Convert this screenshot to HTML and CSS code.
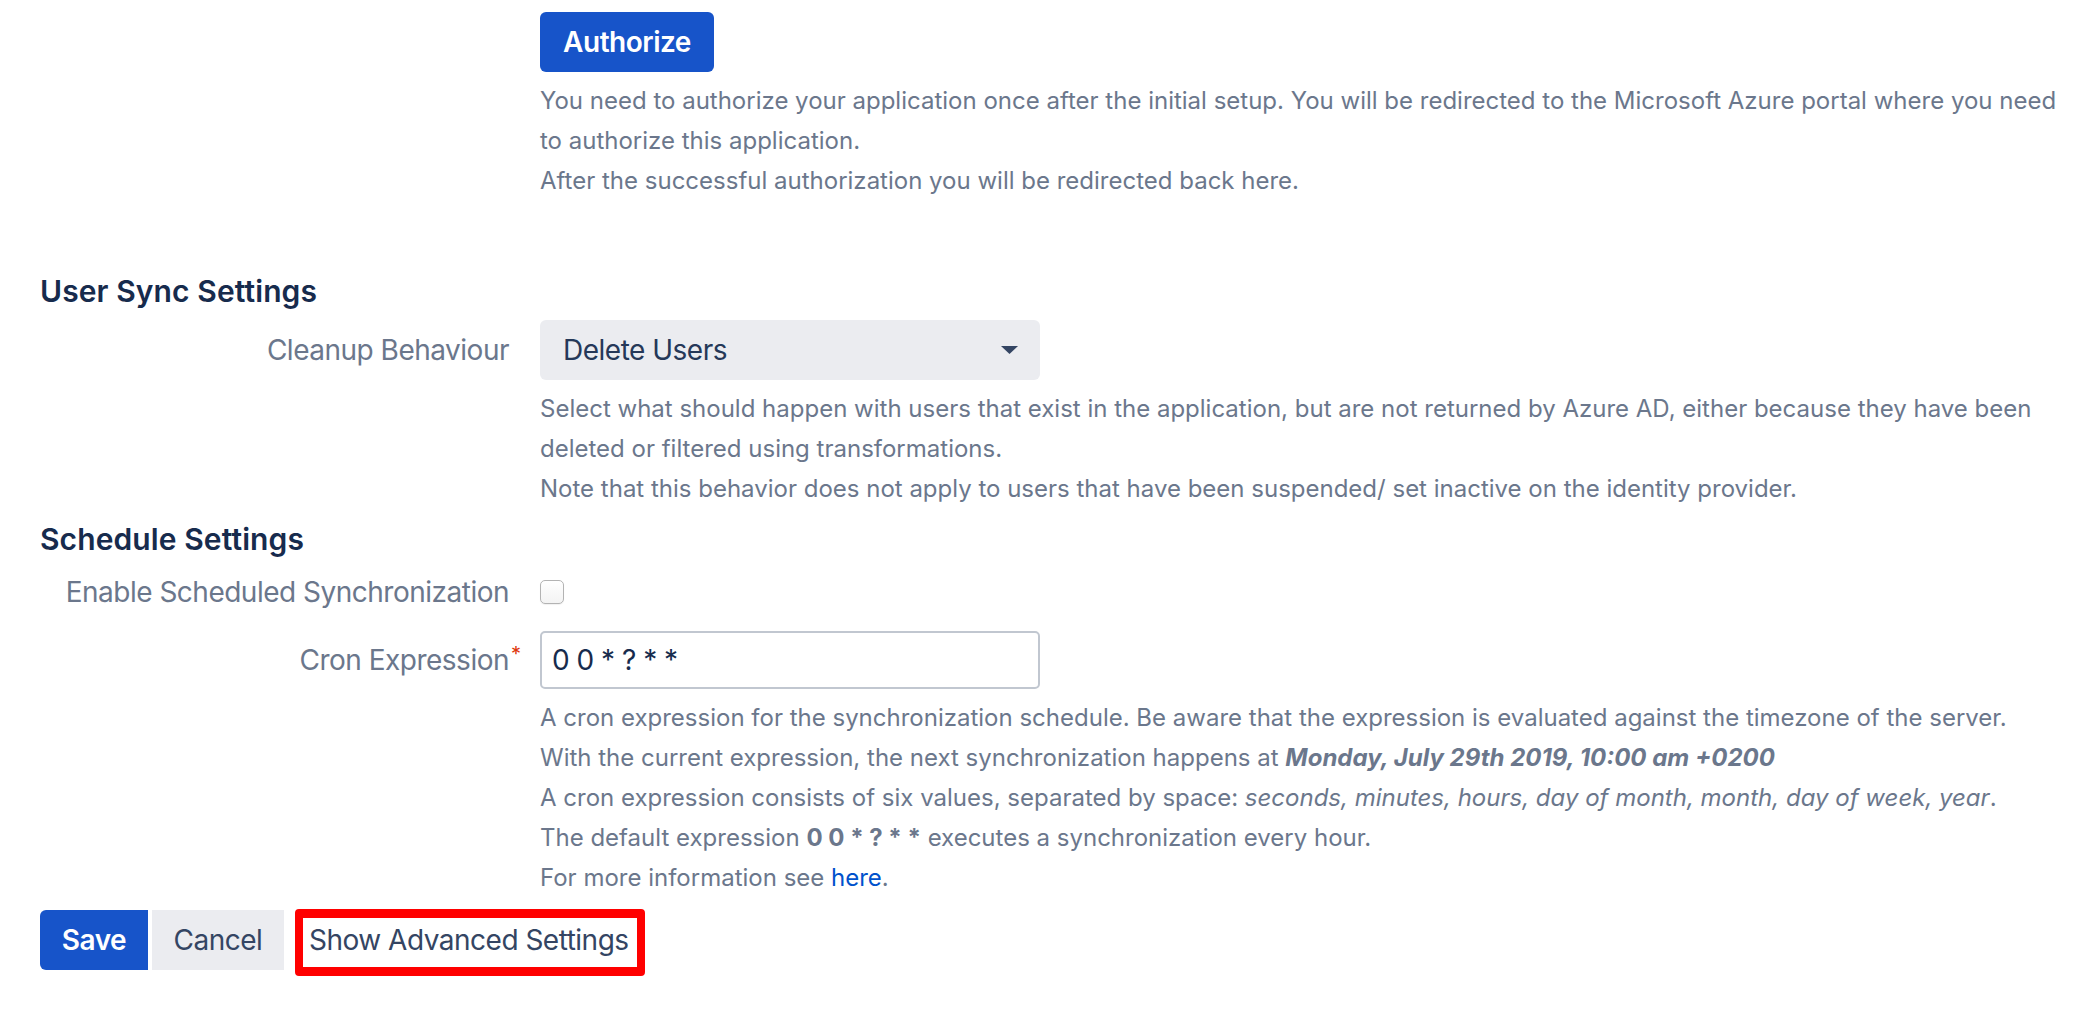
FILE: index.html
```html
<!DOCTYPE html>
<html lang="en">
<head>
<meta charset="utf-8">
<title>Azure AD User Sync</title>
<link rel="stylesheet" href="styles.css">
</head>
<body>
<form class="form">
  <div class="field-group auth-group">
    <div class="label"></div>
    <div class="field">
      <button type="button" class="btn btn-primary btn-authorize">Authorize</button>
      <div class="description">You need to authorize your application once after the initial setup. You will be redirected to the Microsoft Azure portal where you need<br>to authorize this application.<br>After the successful authorization you will be redirected back here.</div>
    </div>
  </div>

  <h3 class="section-title first">User Sync Settings</h3>
  <div class="field-group cleanup-group">
    <label class="label label-select">Cleanup Behaviour</label>
    <div class="field">
      <div class="select">
        <span>Delete Users</span>
        <svg class="select-arrow" width="17" height="8" viewBox="0 0 17 8"><path d="M0 0 H17 L8.5 8 Z" fill="#344563"/></svg>
      </div>
      <div class="description">Select what should happen with users that exist in the application, but are not returned by Azure AD, either because they have been<br>deleted or filtered using transformations.<br>Note that this behavior does not apply to users that have been suspended/ set inactive on the identity provider.</div>
    </div>
  </div>

  <h3 class="section-title">Schedule Settings</h3>
  <div class="field-group checkbox-group">
    <label class="label">Enable Scheduled Synchronization</label>
    <div class="field field-check">
      <input type="checkbox" class="checkbox">
    </div>
  </div>
  <div class="field-group cron-group">
    <label class="label label-input"><span class="req-wrap">Cron Expression<span class="required">*</span></span></label>
    <div class="field">
      <input type="text" class="text-input" value="0 0 * ? * *">
      <div class="description">A cron expression for the synchronization schedule. Be aware that the expression is evaluated against the timezone of the server.<br>With the current expression, the next synchronization happens at <strong><em>Monday, July 29th 2019, 10:00 am +0200</em></strong><br>A cron expression consists of six values, separated by space: <em>seconds, minutes, hours, day of month, month, day of week, year</em>.<br>The default expression <strong>0 0 * ? * *</strong> executes a synchronization every hour.<br>For more information see <a href="#" class="link">here</a>.</div>
    </div>
  </div>

  <div class="buttons">
    <button type="button" class="btn btn-primary btn-save">Save</button>
    <button type="button" class="btn btn-default btn-cancel">Cancel</button>
    <div class="highlight">
      <button type="button" class="btn btn-link">Show Advanced Settings</button>
    </div>
  </div>
</form>
</body>
</html>
```
FILE: styles.css
```css
html, body {
  margin: 0;
  padding: 0;
  background: #ffffff;
}

body {
  font-family: Inter, Roboto, "Noto Sans", "Liberation Sans", sans-serif;
  font-size: 28px;
  line-height: 40px;
  letter-spacing: -0.5px;
  color: #172b4d;
}

.form {
  display: flex;
  flex-direction: column;
  padding: 12px 20px 0 40px;
}

.field-group {
  display: grid;
  grid-template-columns: 469px 1fr;
  column-gap: 31px;
}

.label {
  color: #6b778c;
  text-align: right;
  white-space: nowrap;
}

.label-select {
  padding-top: 10px;
}

.label-input {
  padding-top: 9px;
}

.req-wrap {
  position: relative;
}

.required {
  position: absolute;
  left: 100%;
  top: -9px;
  margin-left: 2px;
  color: #de350b;
  font-size: 20px;
}

.field {
  min-width: 0;
}

.description {
  margin-top: 9px;
  font-size: 24px;
  letter-spacing: 0;
  color: #6b778c;
  white-space: nowrap;
}

.description strong {
  font-weight: 700;
}

.link {
  color: #0052cc;
  text-decoration: none;
}

.section-title {
  margin: 0;
  font-size: 30px;
  line-height: 40px;
  font-weight: 600;
  letter-spacing: 0.1px;
  color: #172b4d;
}

.section-title.first {
  margin-top: 70px;
}

.section-title:not(.first) {
  margin-top: 10px;
}

.cleanup-group {
  margin-top: 9px;
}

.checkbox-group {
  margin-top: 13px;
}

.cron-group {
  margin-top: 19px;
}

.field-check {
  display: flex;
  align-items: center;
  height: 40px;
}

.btn {
  font-family: inherit;
  font-size: 28px;
  line-height: 40px;
  letter-spacing: -0.5px;
  height: 60px;
  padding: 0 20px;
  border: 0;
  margin: 0;
  cursor: pointer;
}

.btn-primary {
  background: #1754c9;
  color: #ffffff;
  font-weight: 600;
}

.btn-authorize {
  display: block;
  width: 174px;
  border-radius: 6px;
}

.btn-default {
  background: #ebecf0;
  color: #344563;
}

.select {
  width: 500px;
  height: 60px;
  box-sizing: border-box;
  display: flex;
  align-items: center;
  justify-content: space-between;
  padding: 0 22px 0 23px;
  background: #ebecf0;
  border-radius: 6px;
  color: #253858;
}

.select-arrow {
  display: block;
}

.checkbox {
  -webkit-appearance: none;
  appearance: none;
  width: 24px;
  height: 24px;
  margin: 0;
  box-sizing: border-box;
  border: 1px solid #b3b3b3;
  border-radius: 5px;
  background: linear-gradient(#ffffff, #f3f3f3);
  box-shadow: 0 1px 1px rgba(0, 0, 0, 0.06);
}

.text-input {
  display: block;
  width: 500px;
  height: 58px;
  box-sizing: border-box;
  margin: 0;
  padding: 0 10px;
  border: 2px solid #c1c7d0;
  border-radius: 5px;
  background: #ffffff;
  font-family: inherit;
  font-size: 28px;
  letter-spacing: -1px;
  word-spacing: 1px;
  color: #172b4d;
  outline: none;
}

.buttons {
  display: flex;
  align-items: flex-start;
  margin-top: 12px;
}

.btn-save {
  width: 108px;
  border-radius: 6px 0 0 6px;
}

.btn-cancel {
  width: 132px;
  margin-left: 4px;
}

.highlight {
  margin-left: 11px;
  margin-top: -1px;
  width: 350px;
  height: 67px;
  box-sizing: border-box;
  border: 8px solid #ff0000;
  border-top-width: 9px;
  border-bottom-width: 9px;
  border-radius: 4px;
  background: #ffffff;
}

.btn-link {
  height: 49px;
  padding: 2px 0 7px 6px;
  background: transparent;
  color: #344563;
  text-align: left;
  white-space: nowrap;
}
```
